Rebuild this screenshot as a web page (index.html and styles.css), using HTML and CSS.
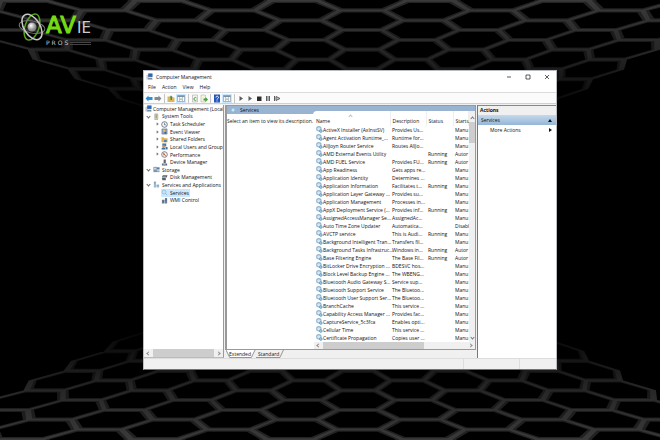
FILE: index.html
```html
<!DOCTYPE html>
<html lang="en">
<head>
<meta charset="utf-8">
<title>Computer Management</title>
<link rel="stylesheet" href="styles.css">
</head>
<body>
<svg class="defs" aria-hidden="true">
  <symbol id="i-comp" viewBox="0 0 16 16"><path fill="#c3ccd6" d="M1 4h5v11H1z"/><path fill="#5b6f86" d="M5 1h10v8H5z"/><path fill="#2468c4" d="M6 2h8v6H6z"/><path fill="#75889c" d="M5 11h9l1 4H5z"/></symbol>
  <symbol id="i-tools" viewBox="0 0 16 16"><path fill="#d5d3c4" stroke="#88867a" d="M4 2h7v13H4z"/><path fill="#b3a25c" d="M6 4h3v8H6z"/></symbol>
  <symbol id="i-clock" viewBox="0 0 16 16"><circle cx="8" cy="8" r="6.5" fill="#f4f6f8" stroke="#6a7480" stroke-width="2"/><path fill="none" stroke="#44617e" stroke-width="1.5" d="M8 4v5h4"/></symbol>
  <symbol id="i-event" viewBox="0 0 16 16"><path fill="#8fa6bf" stroke="#53677c" d="M2 2h12v12H2z"/><path fill="#e8c552" d="M5 4h4v4H5z"/><path fill="#3c5f8e" d="M8 9h4v4H8z"/></symbol>
  <symbol id="i-folder" viewBox="0 0 16 16"><path fill="#e3b44a" d="M1 3h5l2 2h7v9H1z"/><path fill="#4d82b8" d="M7 9h6v5H7z"/></symbol>
  <symbol id="i-users" viewBox="0 0 16 16"><path fill="#4a78ae" d="M3 1h9v7H3z"/><circle cx="6" cy="8" r="3" fill="#c79b68"/><path fill="#3d6ca5" d="M1 15c0-6 9-6 10 0zM10 9h5v6h-3z"/></symbol>
  <symbol id="i-perf" viewBox="0 0 16 16"><circle cx="8" cy="8" r="6.5" fill="#f8f2ef" stroke="#777" stroke-width="2"/><path fill="none" stroke="#c04434" stroke-width="2" d="M5 4l6 8M5 9l3-2"/></symbol>
  <symbol id="i-device" viewBox="0 0 16 16"><path fill="#5c6671" d="M6 1h5v8H6zM2 10h12v5H2z"/><path fill="#dce2e8" d="M4 12h7v1H4z"/></symbol>
  <symbol id="i-storage" viewBox="0 0 16 16"><path fill="#7d93ab" d="M1 2h8v12H1z"/><path fill="#dce6ef" d="M2 4h6v2H2zM2 8h6v1H2z"/><path fill="#4a7faf" d="M9 3h6v5H9z"/><path fill="#9ba7b2" d="M9 10h6v4H9z"/></symbol>
  <symbol id="i-disk" viewBox="0 0 16 16"><path fill="#59616a" d="M4 3h11l-2 5H2zM2 9h9v5H3z"/><path fill="#b9c1c9" d="M5 5h6v1H5z"/></symbol>
  <symbol id="i-apps" viewBox="0 0 16 16"><path fill="#9fb7cc" d="M2 1h5v14H2zM8 8h6v7H8z"/><path fill="#547c9f" d="M3 3h2v2H3zM9 10h4v1H9z"/></symbol>
  <symbol id="i-wmi" viewBox="0 0 16 16"><path fill="#6e8092" d="M2 6h6v9H2zM9 2h5v13H9z"/><path fill="#3972a9" d="M4 8h3v4H4zM10 5h3v4h-3z"/></symbol>
  <symbol id="i-gear" viewBox="0 0 16 16"><circle cx="6.500" cy="6.500" r="5" fill="#d3e8f4" stroke="#8fb6d0" stroke-width="2.500"/><circle cx="11" cy="11.500" r="3" fill="#b4d4e6" stroke="#6497b9" stroke-width="2"/></symbol>
  <symbol id="i-ring" viewBox="0 0 16 16"><circle cx="7" cy="7" r="4.500" fill="#c9e4f5" stroke="#84b4d4" stroke-width="1.500"/><path stroke="#84b4d4" stroke-width="2" d="M10 10l4 4"/></symbol>
  <symbol id="i-pane" viewBox="0 0 16 16"><path fill="#f8fafb" stroke="#71828f" d="M1 2h14v12H1z"/><path fill="#7c909f" d="M1 2h14v3H1zM5 5h1v9H5zM10 5h1v9h-1z"/><path fill="#5ba25b" d="M7 8h2v3H7z"/></symbol>
</svg>

<div class="desktop">
  <svg class="honeycomb" id="honeycomb" viewBox="0 0 660 440" preserveAspectRatio="xMidYMid slice" aria-hidden="true">
    <defs>
      <linearGradient id="rim" gradientUnits="userSpaceOnUse" x1="0" y1="0" x2="0" y2="110">
        <stop offset="0" stop-color="#3a3a3a"/><stop offset=".5" stop-color="#252525"/><stop offset="1" stop-color="#050505"/>
      </linearGradient>
      <linearGradient id="wall" gradientUnits="userSpaceOnUse" x1="0" y1="0" x2="0" y2="110">
        <stop offset="0" stop-color="#232323"/><stop offset=".5" stop-color="#181716"/><stop offset="1" stop-color="#040404"/>
      </linearGradient>
    </defs>
    <g id="comb-top"></g>
    <g id="comb-bottom" transform="translate(-4 440) scale(1 -1)"></g>
  </svg>

  <div class="brand">
    <svg class="atom" viewBox="0 0 28 28" aria-hidden="true">
      <defs><radialGradient id="ball" cx=".4" cy=".35"><stop offset="0" stop-color="#fff"/><stop offset="1" stop-color="#888"/></radialGradient></defs>
      <g fill="none">
        <ellipse cx="14" cy="14" rx="7" ry="13.500" stroke="#58a51c" stroke-width="1.500" transform="rotate(18 14 14)"/>
        <ellipse cx="14" cy="14" rx="13" ry="6" stroke="#777" stroke-width="1" transform="rotate(12 14 14)"/>
        <ellipse cx="14" cy="14" rx="8" ry="14" stroke="#c9c9c9" stroke-width="1.500" transform="rotate(-32 14 14)"/>
      </g>
      <circle cx="14" cy="14" r="4.500" fill="url(#ball)"/>
    </svg>
    <div class="brand-name">
      <div class="brand-main"><span class="av">AV</span><span class="ie">IE</span></div>
      <div class="brand-sub"><span>PROS</span><i></i></div>
    </div>
  </div>

  <main class="window">
    <header class="titlebar">
      <svg class="ico"><use href="#i-comp"/></svg>
      <h1>Computer Management</h1>
      <div class="caption">
        <button aria-label="Minimize"><svg viewBox="0 0 6 6"><path d="M1 3h4"/></svg></button>
        <button aria-label="Maximize"><svg viewBox="0 0 6 6"><path d="M1 1h4v4H1z"/></svg></button>
        <button aria-label="Close"><svg viewBox="0 0 6 6"><path d="M1 1l4 4M5 1L1 5"/></svg></button>
      </div>
    </header>
    <nav class="menubar">
      <button>File</button><button>Action</button><button>View</button><button>Help</button>
    </nav>
    <div class="toolbar">
      <button aria-label="Back"><svg viewBox="0 0 16 16"><path fill="#2f8fd6" d="M1 8l6-6v3h8v6H7v3z"/></svg></button>
      <button aria-label="Forward"><svg viewBox="0 0 16 16"><path fill="#848a8e" d="M15 8L9 2v3H1v6h8v3z"/></svg></button>
      <i class="sep"></i>
      <button aria-label="Up one level"><svg viewBox="0 0 16 16"><path fill="#d9b765" d="M1 4h5l2 2h7v9H1z"/><path fill="#4d8a46" d="M8 2l4 4h-2v5H7V6H5z"/></svg></button>
      <button class="on" aria-label="Show console tree"><svg><use href="#i-pane"/></svg></button>
      <i class="sep"></i>
      <button aria-label="Refresh"><svg viewBox="0 0 16 16"><path fill="#f4f4f1" stroke="#9a9c98" d="M3 1h10v14H3z"/><path fill="none" stroke="#46a046" stroke-width="2" d="M11 7a3 3 0 1 0 0 4"/></svg></button>
      <button aria-label="Export list"><svg viewBox="0 0 16 16"><path fill="#f6f3dc" stroke="#aaa892" d="M2 1h9v14H2z"/><path fill="#3fa33f" d="M7 8h4V5l5 5-5 5v-3H7z"/></svg></button>
      <i class="sep"></i>
      <button aria-label="Help"><svg viewBox="0 0 16 16"><path fill="#2456b8" d="M2 0h12v16H2z"/><path fill="none" stroke="#fff" stroke-width="2" d="M6 6c0-4 5-3 5 0 0 2-3 2-3 4M8 12v2"/></svg></button>
      <button class="on" aria-label="Show action pane"><svg><use href="#i-pane"/></svg></button>
      <i class="sep"></i>
      <button aria-label="Start service"><svg viewBox="0 0 16 16"><path fill="#5c5c5c" d="M5 3l7 5-7 5z"/></svg></button>
      <button aria-label="Resume service"><svg viewBox="0 0 16 16"><path fill="#5c5c5c" d="M5 3l7 5-7 5z"/></svg></button>
      <button aria-label="Stop service"><svg viewBox="0 0 16 16"><path fill="#2c2c2c" d="M4 4h9v9H4z"/></svg></button>
      <button aria-label="Pause service"><svg viewBox="0 0 16 16"><path fill="#5c5c5c" d="M4 3h3v10H4zM9 3h3v10H9z"/></svg></button>
      <button aria-label="Restart service"><svg viewBox="0 0 16 16"><path fill="#5c5c5c" d="M2 3h2v10H2z"/><path fill="#ccc" stroke="#5c5c5c" stroke-width="2" d="M6 4l8 4-8 4z"/></svg></button>
    </div>

    <div class="panes">
      <aside class="tree-pane">
        <ul class="tree">
          <li class="l0"><svg class="ico"><use href="#i-comp"/></svg><span>Computer Management (Local</span></li>
          <li class="l1"><b class="open"></b><svg class="ico"><use href="#i-tools"/></svg><span>System Tools</span></li>
          <li class="l2"><b></b><svg class="ico"><use href="#i-clock"/></svg><span>Task Scheduler</span></li>
          <li class="l2"><b></b><svg class="ico"><use href="#i-event"/></svg><span>Event Viewer</span></li>
          <li class="l2"><b></b><svg class="ico"><use href="#i-folder"/></svg><span>Shared Folders</span></li>
          <li class="l2"><b></b><svg class="ico"><use href="#i-users"/></svg><span>Local Users and Groups</span></li>
          <li class="l2"><b></b><svg class="ico"><use href="#i-perf"/></svg><span>Performance</span></li>
          <li class="l2"><b class="none"></b><svg class="ico"><use href="#i-device"/></svg><span>Device Manager</span></li>
          <li class="l1"><b class="open"></b><svg class="ico"><use href="#i-storage"/></svg><span>Storage</span></li>
          <li class="l2"><b class="none"></b><svg class="ico"><use href="#i-disk"/></svg><span>Disk Management</span></li>
          <li class="l1"><b class="open"></b><svg class="ico"><use href="#i-apps"/></svg><span>Services and Applications</span></li>
          <li class="l2"><b class="none"></b><div class="selected"><svg class="ico"><use href="#i-ring"/></svg><span>Services</span></div></li>
          <li class="l2"><b class="none"></b><svg class="ico"><use href="#i-wmi"/></svg><span>WMI Control</span></li>
        </ul>
        <div class="hscroll"><b class="left"></b><i class="thumb tree-thumb"></i><b></b></div>
      </aside>

      <section class="center">
        <div class="view">
          <div class="view-title"><svg class="ico"><use href="#i-ring"/></svg><h2>Services</h2></div>
          <div class="view-body">
            <p class="hint">Select an item to view its description.</p>
            <div class="list">
              <div class="list-main">
                <div class="list-clip">
                  <table>
                    <colgroup><col class="c-name"><col class="c-desc"><col class="c-status"><col class="c-start"></colgroup>
                    <thead><tr><th><b class="sort"></b>Name</th><th>Description</th><th>Status</th><th>Startu</th></tr></thead>
                    <tbody>
                      <tr><td><svg class="ico"><use href="#i-gear"/></svg>ActiveX Installer (AxInstSV)</td><td>Provides Us...</td><td></td><td>Manu</td></tr>
                      <tr><td><svg class="ico"><use href="#i-gear"/></svg>Agent Activation Runtime_...</td><td>Runtime for...</td><td></td><td>Manu</td></tr>
                      <tr><td><svg class="ico"><use href="#i-gear"/></svg>AllJoyn Router Service</td><td>Routes AllJo...</td><td></td><td>Manu</td></tr>
                      <tr><td><svg class="ico"><use href="#i-gear"/></svg>AMD External Events Utility</td><td></td><td>Running</td><td>Autor</td></tr>
                      <tr><td><svg class="ico"><use href="#i-gear"/></svg>AMD FUEL Service</td><td>Provides FU...</td><td>Running</td><td>Autor</td></tr>
                      <tr><td><svg class="ico"><use href="#i-gear"/></svg>App Readiness</td><td>Gets apps re...</td><td></td><td>Manu</td></tr>
                      <tr><td><svg class="ico"><use href="#i-gear"/></svg>Application Identity</td><td>Determines ...</td><td></td><td>Manu</td></tr>
                      <tr><td><svg class="ico"><use href="#i-gear"/></svg>Application Information</td><td>Facilitates t...</td><td>Running</td><td>Manu</td></tr>
                      <tr><td><svg class="ico"><use href="#i-gear"/></svg>Application Layer Gateway ...</td><td>Provides su...</td><td></td><td>Manu</td></tr>
                      <tr><td><svg class="ico"><use href="#i-gear"/></svg>Application Management</td><td>Processes in...</td><td></td><td>Manu</td></tr>
                      <tr><td><svg class="ico"><use href="#i-gear"/></svg>AppX Deployment Service (...</td><td>Provides inf...</td><td>Running</td><td>Manu</td></tr>
                      <tr><td><svg class="ico"><use href="#i-gear"/></svg>AssignedAccessManager Se...</td><td>AssignedAc...</td><td></td><td>Manu</td></tr>
                      <tr><td><svg class="ico"><use href="#i-gear"/></svg>Auto Time Zone Updater</td><td>Automatica...</td><td></td><td>Disabl</td></tr>
                      <tr><td><svg class="ico"><use href="#i-gear"/></svg>AVCTP service</td><td>This is Audi...</td><td>Running</td><td>Manu</td></tr>
                      <tr><td><svg class="ico"><use href="#i-gear"/></svg>Background Intelligent Tran...</td><td>Transfers fil...</td><td></td><td>Manu</td></tr>
                      <tr><td><svg class="ico"><use href="#i-gear"/></svg>Background Tasks Infrastruc...</td><td>Windows in...</td><td>Running</td><td>Autor</td></tr>
                      <tr><td><svg class="ico"><use href="#i-gear"/></svg>Base Filtering Engine</td><td>The Base Fil...</td><td>Running</td><td>Autor</td></tr>
                      <tr><td><svg class="ico"><use href="#i-gear"/></svg>BitLocker Drive Encryption ...</td><td>BDESVC hos...</td><td></td><td>Manu</td></tr>
                      <tr><td><svg class="ico"><use href="#i-gear"/></svg>Block Level Backup Engine ...</td><td>The WBENG...</td><td></td><td>Manu</td></tr>
                      <tr><td><svg class="ico"><use href="#i-gear"/></svg>Bluetooth Audio Gateway S...</td><td>Service sup...</td><td></td><td>Manu</td></tr>
                      <tr><td><svg class="ico"><use href="#i-gear"/></svg>Bluetooth Support Service</td><td>The Bluetoo...</td><td></td><td>Manu</td></tr>
                      <tr><td><svg class="ico"><use href="#i-gear"/></svg>Bluetooth User Support Ser...</td><td>The Bluetoo...</td><td></td><td>Manu</td></tr>
                      <tr><td><svg class="ico"><use href="#i-gear"/></svg>BranchCache</td><td>This service ...</td><td></td><td>Manu</td></tr>
                      <tr><td><svg class="ico"><use href="#i-gear"/></svg>Capability Access Manager ...</td><td>Provides fac...</td><td></td><td>Manu</td></tr>
                      <tr><td><svg class="ico"><use href="#i-gear"/></svg>CaptureService_5c3fca</td><td>Enables opti...</td><td></td><td>Manu</td></tr>
                      <tr><td><svg class="ico"><use href="#i-gear"/></svg>Cellular Time</td><td>This service ...</td><td></td><td>Manu</td></tr>
                      <tr><td><svg class="ico"><use href="#i-gear"/></svg>Certificate Propagation</td><td>Copies user ...</td><td></td><td>Manu</td></tr>
                    </tbody>
                  </table>
                </div>
                <div class="vscroll"><b class="up"></b><i></i><b class="down"></b></div>
              </div>
              <div class="hscroll"><b class="left"></b><i class="thumb list-thumb"></i><b></b></div>
            </div>
          </div>
        </div>
        <div class="tabs">
          <button class="tab active"><svg viewBox="0 0 32 8" preserveAspectRatio="none"><path fill="#fff" stroke="#777" d="M0 0L4 7.500H27L31 0"/></svg><span>Extended</span></button>
          <button class="tab"><svg viewBox="0 0 32 8" preserveAspectRatio="none"><path fill="#f0f0f0" stroke="#777" d="M0 7.500H27L31 0"/></svg><span>Standard</span></button>
        </div>
      </section>

      <aside class="actions">
        <h2>Actions</h2>
        <button class="group"><span>Services</span><svg viewBox="0 0 6 6"><path d="M1 5l2-3 2 3z"/></svg></button>
        <button class="more"><span>More Actions</span><svg viewBox="0 0 6 6"><path d="M2 1l3 2-3 2z"/></svg></button>
      </aside>
    </div>
    <footer class="status"><i></i><i></i><i></i></footer>
  </main>
</div>
<script src="honeycomb.js"></script>
</body>
</html>
```
FILE: styles.css
```css
* { box-sizing: border-box; }
body { margin: 0; background: #000; font: 5px/8px "Open Sans", "Noto Sans", sans-serif; color: #111; }
h1, h2, p, ul { margin: 0; padding: 0; font: inherit; list-style: none; }
button { border: 0; padding: 0; margin: 0; background: none; font: inherit; color: inherit; }
svg { display: block; }
.defs { position: absolute; width: 0; height: 0; }
.ico { width: 7px; height: 7px; flex: none; }

.desktop { position: relative; min-height: 100vh; padding: 70px 103px 70px 143px; overflow: hidden; }
.honeycomb { position: absolute; inset: 0; width: 100%; height: 100%; }

.brand { position: absolute; left: 18px; top: 13px; display: flex; }
.atom { width: 28px; height: 28px; }
.brand-name { font-family: "DejaVu Sans", sans-serif; }
.brand-main { display: flex; align-items: baseline; gap: 1px; line-height: 24px; }
.av { font-size: 23px; color: #75dc12; -webkit-text-stroke: 1px #75dc12; }
.ie { font-size: 15px; color: #ccc; }
.brand-sub { display: flex; align-items: center; font-size: 6px; line-height: 6px; color: #ccc; letter-spacing: 2px; }
.brand-sub i { flex: 1; height: 3px; border-top: 1px solid #444; border-bottom: 1px solid #444; }

.window { position: relative; background: #f0f0f0; border: 1px solid #b9bcc2; border-bottom-color: #8b6b57; }
.titlebar { display: flex; align-items: center; gap: 3px; height: 11px; padding-left: 2px; background: #fff; }
.caption { display: flex; gap: 13px; margin-left: auto; padding-right: 6px; }
.caption svg { width: 6px; height: 6px; fill: none; stroke: #333; stroke-width: 0.8; }
.menubar { display: flex; gap: 6px; height: 11px; padding: 0 4px; background: #fff; border-bottom: 1px solid #dcdcdc; }
.menubar button { line-height: 10px; }
.toolbar { display: flex; align-items: center; gap: 1px; height: 11px; padding-left: 1px; background: #fbfbfb; border-bottom: 1px solid #d0d0d0; }
.toolbar button { width: 8px; height: 9px; }
.toolbar button svg { width: 100%; height: 100%; }
.toolbar .on { width: 10px; padding: 0 1px; background: #cce8ff; }
.sep { width: 1px; height: 9px; margin: 0 1px; background: #c4c4c4; }

.panes { display: grid; grid-template-columns: 80px minmax(0, 1fr) 79px; gap: 1px; padding-top: 1px; }
.tree-pane { display: flex; flex-direction: column; background: #fff; border-right: 1px solid #999; border-bottom: 1px solid #bbb; overflow: hidden; }
.tree { display: grid; grid-auto-rows: 1fr; height: 99px; }
.tree li { display: flex; align-items: center; gap: 2px; white-space: nowrap; min-height: 0; }
.tree .l0 { padding-left: 1px; gap: 1px; }
.l1 { padding-left: 2px; }
.l2 { padding-left: 10px; }
.tree b { width: 5px; height: 5px; flex: none; display: grid; place-items: center; }
.tree b::before, .hscroll b::before, .vscroll b::before, .sort::before { content: ""; display: block; box-sizing: content-box; width: 2px; height: 2px; border: solid #bbb; border-width: 1px 1px 0 0; transform: rotate(45deg); }
.tree b::before { width: 1px; height: 1px; border-color: #777; }
.tree b.open::before { width: 2px; height: 2px; border-color: #666; transform: rotate(135deg); }
.tree b.none::before { display: none; }
.selected { display: flex; align-items: center; gap: 2px; padding-right: 1px; height: 8px; background: #cce8ff; }

.hscroll { display: flex; align-items: center; gap: 3px; height: 7px; padding: 0 3px; background: #f0f0f0; }
.tree-pane .hscroll { margin-top: auto; height: 8px; }
.hscroll b { margin-left: auto; }
.hscroll b.left { margin-left: 0; }
.hscroll b::before { border-color: #888; }
.hscroll b.left::before { transform: rotate(225deg); }
.thumb { align-self: stretch; background: #cdcdcd; }
.tree-thumb { width: 61px; }
.list-thumb { width: 101px; }

.center { min-width: 0; }
.view { background: #fff; border: 1px solid #999; border-width: 1px 1px 1px 2px; }
.view-title { display: flex; align-items: center; gap: 3px; height: 8px; padding-left: 3px; background: #99b4d1; }
.view-body { display: grid; grid-template-columns: 86px minmax(0, 1fr); }
.hint { padding: 3px 0 0; white-space: nowrap; }
.list { min-width: 0; background: #fff; border-top-left-radius: 4px; margin-top: -3px; padding-left: 1px; }
.list-main { display: flex; }
.list-clip { flex: 1; min-width: 0; overflow: hidden; }
table { table-layout: fixed; width: 100%; border-collapse: collapse; }
.c-name { width: 76px; }
.c-desc { width: 36px; }
.c-status { width: 27px; }
th, td { padding: 0 0 0 2px; height: 8px; text-align: left; font-weight: 400; white-space: nowrap; }
th { position: relative; height: 15px; padding-top: 4px; border-right: 1px solid #eee; }
td:first-child .ico { display: inline-block; vertical-align: top; }
.sort { position: absolute; left: 35px; top: 4px; }
.sort::before { transform: rotate(-45deg); }
.vscroll { display: flex; flex-direction: column; align-items: center; width: 6px; padding: 6px 0 3px; background: #f0f0f0; }
.vscroll i { width: 100%; height: 21px; margin-top: 2px; background: #cdcdcd; }
.vscroll .up::before { transform: rotate(-45deg); border-color: #777; }
.vscroll .down { margin-top: auto; }
.vscroll .down::before { transform: rotate(135deg); border-color: #777; }

.tabs { display: flex; height: 8px; padding-left: 1px; }
.tab { position: relative; height: 8px; padding: 0 5px 0 3px; line-height: 7px; }
.tab + .tab { padding-left: 2px; }
.tab svg { position: absolute; inset: 0; width: 100%; height: 100%; stroke-width: 0.8; }
.tab span { position: relative; }

.actions { background: #fff; border-left: 1px solid #777; border-top: 1px solid #888; }
.actions h2 { height: 9px; padding-left: 2px; background: #f0f0f0; font-weight: 700; }
.actions button { display: flex; align-items: center; justify-content: space-between; width: 100%; height: 10px; padding: 0 3px; }
.actions button svg { width: 6px; height: 6px; fill: #111; }
.actions .group { background: linear-gradient(#c3d9ec, #95b6d6); }
.actions .more { padding-left: 12px; }
.status { display: grid; grid-template-columns: 1fr 56px 37px; height: 11px; border-top: 1px solid #ddd; }
.status i + i { border-left: 1px solid #ddd; }
```
FILE: honeycomb.js
```js
// Perspective honeycomb: columns narrow toward the horizon, rows stay evenly spaced.
const ORIGIN_X = 362;
const HALF_ROW = 9.8;
const spacing = (y) => 68 - 0.32 * y;

function hexPath(col, cy, scale) {
  const corners = [[-0.67, 0], [-0.36, -1], [0.36, -1], [0.67, 0], [0.36, 1], [-0.36, 1]];
  return corners.map(([du, dv], i) => {
    const y = cy + dv * HALF_ROW * scale.y;
    const x = ORIGIN_X + (col + du * scale.x) * spacing(y);
    return `${i ? 'L' : 'M'}${x.toFixed(1)} ${y.toFixed(1)}`;
  }).join('') + 'Z';
}

function comb(id) {
  const cells = [];
  for (let col = -6; col <= 5; col++) {
    const first = col % 2 ? -9 : -19;
    for (let row = 0; row < 7; row++) cells.push([col, first + row * 2 * HALF_ROW]);
  }
  const layer = (fill, x, y) =>
    `<path fill="${fill}" d="${cells.map(([c, cy]) => hexPath(c, cy, { x, y })).join('')}"/>`;
  document.getElementById(id).innerHTML =
    layer('url(#rim)', 1.08, 1.1) + layer('url(#wall)', 0.91, 0.9) + layer('#000', 0.83, 0.79);
}

comb('comb-top');
comb('comb-bottom');
```
